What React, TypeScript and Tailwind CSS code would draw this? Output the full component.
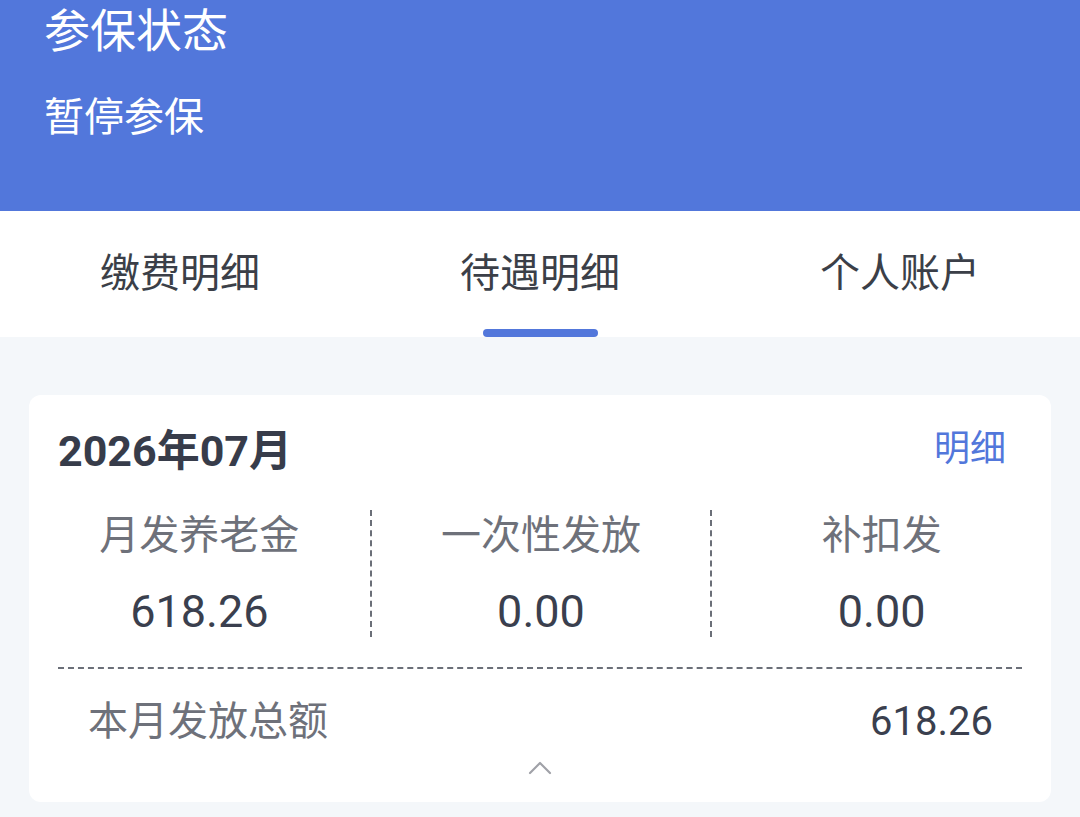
import { ChevronUp } from 'lucide-react'

const tabs = ['缴费明细', '待遇明细', '个人账户']

const items = [
  { label: '月发养老金', value: '618.26' },
  { label: '一次性发放', value: '0.00' },
  { label: '补扣发', value: '0.00' },
]

export default function App() {
  return (
    <div className="h-[817px] w-[1080px] overflow-hidden bg-[#f4f7fa] font-['Roboto','Noto_Sans_CJK_SC',sans-serif]">
      {/* header */}
      <div className="h-[211px] bg-[#5277db] px-[44px] text-white">
        <div className="pt-[6px] text-[46px] leading-[50px]">参保状态</div>
        <div className="mt-[37px] text-[40px] leading-[50px]">暂停参保</div>
      </div>

      {/* tabs */}
      <div className="grid h-[126px] grid-cols-3 bg-white">
        {tabs.map((t, i) => (
          <div key={t} className="flex flex-col items-center">
            <div className="mt-[38px] text-[40px] leading-[50px] text-[#3b3f48]">{t}</div>
            <div className="flex-1" />
            {i === 1 ? <div className="h-[8px] w-[115px] rounded-full bg-[#5277db]" /> : null}
          </div>
        ))}
      </div>

      {/* card */}
      <div className="mx-[29px] mt-[58px] h-[407px] rounded-[12px] bg-white">
        <div className="flex h-[115px] items-start justify-between px-[29px] pt-[28px]">
          <div className="text-[43px] font-bold leading-[56px] text-[#373c4a]">2026年07月</div>
          <div className="mr-[16px] text-[36px] leading-[52px] text-[#5277db]">明细</div>
        </div>

        <div className="grid grid-cols-3">
          {items.map((it, i) => (
            <div
              key={it.label}
              className={
                'flex h-[127px] flex-col items-center ' +
                (i > 0 ? 'border-l-2 border-dashed border-[#6b6f78]' : '')
              }
            >
              <div className="-mt-[2px] text-[40px] leading-[56px] text-[#6e717a]">{it.label}</div>
              <div className="mt-[20px] text-[45px] leading-[56px] text-[#3a3f4e]">{it.value}</div>
            </div>
          ))}
        </div>

        <div className="mx-[29px] mt-[30px] border-t-2 border-dashed border-[#6b6f78]" />

        <div className="mt-[25px] flex h-[56px] items-center justify-between pl-[59px] pr-[58px]">
          <div className="text-[40px] text-[#6e717a]">本月发放总额</div>
          <div className="text-[40px] text-[#3a3f4e]">618.26</div>
        </div>

        <div className="-mt-[2px] flex justify-center">
          <ChevronUp className="h-[40px] w-[40px] text-[#a0a2a8]" strokeWidth={1.3} />
        </div>
      </div>
    </div>
  )
}
